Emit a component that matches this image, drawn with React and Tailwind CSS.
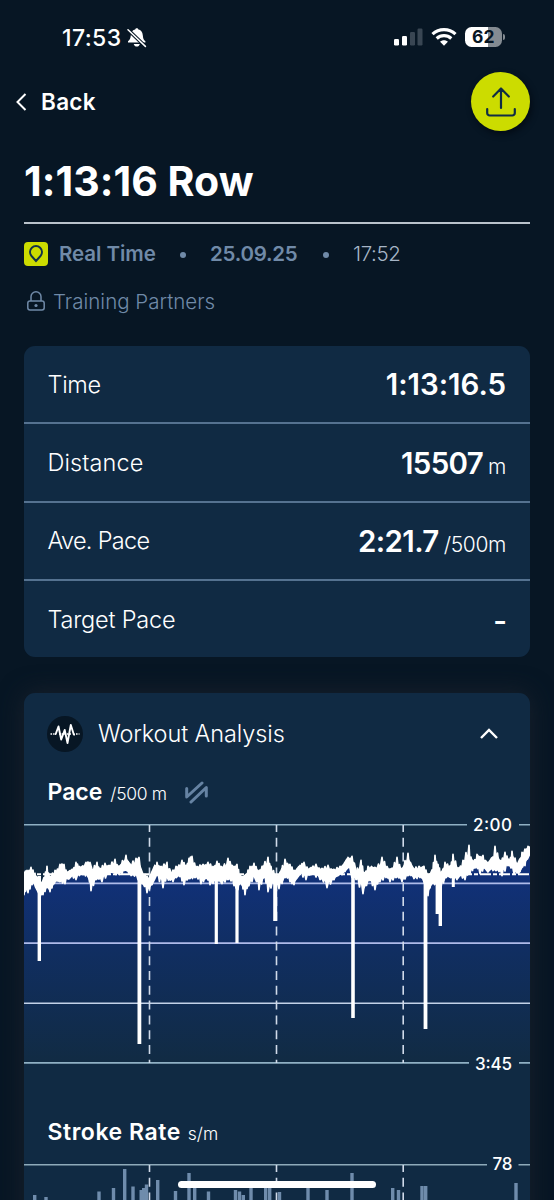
import React from "react";

const TOPS = [24,872,27,870,31,867,35,873,38,881,41,882,44,878,47,866,50,876,55,870,60,864,64,864,68,872,72,869,76,862,79,866,86,862,90,862,92,869,97,862,100,868,105,863,109,865,115,859,119,866,126,855,130,864,136,858,139,857,141,875,145,874,149,878,152,872,157,862,161,866,167,862,170,874,176,866,182,860,186,865,189,858,192,856,197,866,203,864,208,862,213,866,217,861,221,866,228,858,232,865,237,864,240,875,246,874,250,866,254,863,258,870,262,866,268,857,271,866,276,875,280,872,285,859,290,864,294,870,300,865,304,862,310,868,316,864,322,868,328,865,334,869,340,866,345,863,348,857,352,856,354,872,361,860,364,872,368,866,375,867,382,857,387,866,392,868,397,857,402,868,408,853,413,868,419,866,424,866,428,874,432,870,435,855,438,864,441,872,445,862,450,866,453,854,458,868,463,860,469,845,473,865,477,854,483,855,488,866,495,846,500,860,505,852,509,860,512,851,518,865,522,852,528,846,530,847];
const BOTTOMS = [24,895,27,888,28,893,32,885,36,884,40,898,43,895,47,888,50,892,54,884,60,882,65,884,71,876,76,880,83,875,88,877,91,891,96,880,102,882,109,874,116,875,122,874,127,871,131,876,138,880,142,884,147,893,152,885,156,875,163,888,168,878,173,882,180,877,184,885,190,879,195,878,201,884,206,879,210,885,216,882,222,884,228,880,234,886,238,890,241,883,245,895,249,886,255,877,259,890,264,878,268,892,274,884,279,889,285,878,290,882,294,885,300,874,306,880,312,874,320,880,327,888,334,880,342,875,348,868,356,880,363,894,370,881,375,890,380,882,386,878,390,882,396,878,402,882,408,876,414,879,420,878,424,882,428,896,432,884,437,885,441,888,446,878,451,878,457,880,460,876,465,880,470,874,475,867,480,874,485,868,490,870,496,871,502,876,508,866,514,874,520,872,525,866,530,852];
const DROPS = [[39.3,961,3.4],[139.4,1044,3.8],[216.3,944,3.2],[237,943,3.2],[275.2,921,4],[353,1018,3.6],[425.5,1029,3.8],[437.3,914,3.4],[440.3,926,3.4],[453.3,887,3]];

function valueAt(points, x) {
  for (let i = 0; i < points.length - 2; i += 2) {
    if (x <= points[i + 2]) {
      const t = (x - points[i]) / (points[i + 2] - points[i]);
      return points[i + 1] + t * (points[i + 3] - points[i + 1]);
    }
  }
  return points[points.length - 1];
}

// Each extreme becomes a narrow spike; smaller teeth fill the span up to the next one.
function edge(points, direction) {
  const out = [];
  for (let i = 0; i < points.length; i += 2) {
    const x = points[i];
    const y = points[i + 1];
    out.push([x, y + direction * 0.4]);
    if (i + 2 < points.length) {
      const nx = points[i + 2];
      const ny = points[i + 3];
      const span = nx - x;
      const inner = direction > 0 ? Math.max(y, ny) : Math.min(y, ny);
      if (span > 2.5) {
        out.push([x + span * 0.3, inner + direction * 2]);
        out.push([x + span * 0.5, (y + ny) / 2 + direction * ((i * 7) % 4)]);
        out.push([x + span * 0.72, inner + direction * (1 + ((i * 5) % 3))]);
      }
    }
  }
  return out;
}

const upper = edge(TOPS, 1);
const lower = edge(BOTTOMS, -1).reverse();
const band = [...upper, ...lower].map((p) => p.join(",")).join(" ");
const middle = [];
for (let x = 24; x <= 530; x += 2) middle.push([x, (valueAt(TOPS, x) + valueAt(BOTTOMS, x)) / 2]);
const middleLine = middle.map((p) => p.join(",")).join(" ");
const area = `24,1063 ${middleLine} 530,1063`;

function StatusBar() {
  return (
    <div className="flex h-[72px] items-center justify-between pl-[62px] pr-[49px] pt-[3px]">
      <div className="flex items-center gap-[5px] pt-[1px]">
        <span className="text-[23px] font-medium leading-none tracking-[0.4px]">17:53</span>
        <svg width="20" height="20" viewBox="0 0 20 20" fill="none">
          <path d="M1 14.500v-1.200C2.600 12 3.600 10.500 3.800 7.300 4 3.500 6 1.800 8.200 1.400 8.400.5 9 .2 9.800.2s1.400.3 1.600 1.200c2.300.5 4.200 2.200 4.400 5.900.2 3.200.8 4.700 2.600 6v1.200z" fill="#fff" />
          <path d="M6.700 16h6.200c-.5 1.700-1.700 2.600-3.100 2.600S7.200 17.700 6.700 16z" fill="#fff" />
          <path d="M.8 1.500 18.700 18.700" stroke="#071624" strokeWidth="3.600" />
          <path d="M1 1.700 18.400 18.400" stroke="#fff" strokeWidth="1.500" strokeLinecap="round" />
        </svg>
      </div>
      <div className="flex items-center pb-[1px]">
        <svg width="29" height="18" viewBox="0 0 29 18">
          <rect x="0" y="11" width="5" height="6.500" rx="1.200" fill="#fff" />
          <rect x="8" y="8" width="5" height="9.500" rx="1.200" fill="#fff" />
          <rect x="16" y="4" width="5" height="13.500" rx="1.200" fill="#394653" />
          <rect x="23.500" y="0.500" width="5" height="17" rx="1.200" fill="#394653" />
        </svg>
        <svg className="ml-[8px]" width="26" height="18" viewBox="0 0 26 18" fill="none" stroke="#fff">
          <path d="M1.500 6.200C8 .1 18 .1 24.500 6.200" strokeWidth="3.200" />
          <path d="M5.700 10.500c4.200-3.800 10.400-3.800 14.600 0" strokeWidth="3.200" />
          <path d="m13 17.700-3.900-4c2.200-2 5.600-2 7.800 0z" fill="#fff" stroke="none" />
        </svg>
        <div className="ml-[8px] flex items-center gap-[1px]">
          <div className="flex h-[19.500px] w-[37.500px] items-center justify-center rounded-[6.500px] bg-[linear-gradient(90deg,#fff_0_62%,#848b92_62%)] text-[17.500px] font-bold leading-none text-[#071624]">
            62
          </div>
          <div className="h-[6px] w-[2px] rounded-r-full bg-[#848b92]" />
        </div>
      </div>
    </div>
  );
}

function Row({ label, labelClass, value, valueClass, unit, last }) {
  return (
    <div className={last ? "flex h-[77px] items-center justify-between pl-[23.500px] pr-[24px]" : "flex h-[78.300px] items-center justify-between border-b-2 border-[#557290] pl-[23.500px] pr-[24px]"}>
      <span className={`text-[23.500px] font-light ${labelClass}`}>{label}</span>
      <span className="flex items-baseline gap-[5px] pt-[2px]">
        <span className={`text-[29.500px] font-semibold leading-none ${valueClass}`}>{value}</span>
        {unit && <span className="text-[21px] font-light leading-none tracking-[-0.35px]">{unit}</span>}
      </span>
    </div>
  );
}

function PaceChart() {
  return (
    <svg className="block" width="506" height="260" viewBox="24 815 506 260" fontFamily="Inter, sans-serif">
      <defs>
        <linearGradient id="paceFill" gradientUnits="userSpaceOnUse" x1="0" y1="870" x2="0" y2="1063">
          <stop offset="0" stopColor="#11317b" />
          <stop offset="0.400" stopColor="#102e62" />
          <stop offset="1" stopColor="#112b43" />
        </linearGradient>
      </defs>
      <rect x="24" y="825" width="506" height="238" fill="#112b43" />
      <polygon points={area} fill="url(#paceFill)" />
      <g strokeWidth="1.600">
        <path d="M24 824.800H467M519 824.800H530" stroke="#8fb0c4" />
        <path d="M24 883.400H530M24 943.100H530" stroke="#aebbea" />
        <path d="M24 1003.200H530" stroke="#c3d2e8" />
        <path d="M24 1062.900H469M519 1062.900H530" stroke="#8fb0c4" />
      </g>
      <path d="M149.500 825V1063M276.500 825V1063M403.200 825V1063" stroke="#d0dae9" strokeWidth="1.600" strokeDasharray="9 5.800" strokeDashoffset="2" />
      <path d="M24 874.300H530" stroke="#fff" strokeWidth="2" strokeDasharray="11 2 4 2" />
      <polygon points={band} fill="#fff" stroke="#fff" strokeWidth="1.700" strokeLinejoin="round" />
      <polyline points={middleLine} fill="none" stroke="#fff" strokeWidth="7" />
      {DROPS.map(([x, y, w]) => (
        <path key={x} d={`M${x} 876V${y}`} stroke="#fff" strokeWidth={w} />
      ))}
      <text x="473" y="830.500" fontSize="17" fontWeight="500" fill="#fff" textLength="39">2:00</text>
      <text x="475" y="1070" fontSize="17" fontWeight="500" fill="#fff" textLength="37">3:45</text>
    </svg>
  );
}

const BARS = [[34.700,1195],[46,1197],[99,1191.500],[113.500,1188],[124.700,1169],[133,1186.500],[141.200,1190],[143.700,1188],[146.500,1184.500],[157.700,1180],[175.500,1191],[189,1173],[194.700,1186],[208.500,1191.500],[235.500,1190],[239.500,1191.500],[243.300,1195],[251,1186],[265.700,1186],[269.700,1186],[279.500,1192],[308,1187],[327,1190],[352,1173],[392.700,1188],[398.500,1190],[422,1186],[425.700,1186],[516,1183]];

function StrokeChart() {
  return (
    <svg className="block" width="506" height="50" viewBox="24 1150 506 50" fontFamily="Inter, sans-serif">
      {BARS.map(([x, y]) => (
        <rect key={x} x={x - 1.7} y={y} width="3.400" height={1200 - y} fill="#6f8cac" />
      ))}
      <path d="M24 1164.800H487M518.500 1164.800H530" stroke="#8eaaba" strokeWidth="1.600" />
      <path d="M149.500 1165V1200M276.500 1165V1200M403.200 1165V1200" stroke="#d0dae9" strokeWidth="1.600" strokeDasharray="9 5.800" strokeDashoffset="2" />
      <text x="492.500" y="1170.300" fontSize="17" fontWeight="500" fill="#fff" textLength="20">78</text>
    </svg>
  );
}

export default function App() {
  return (
    <main className="relative h-[1200px] w-[554px] overflow-hidden bg-[#071624] font-['Inter',sans-serif] text-white">
      <StatusBar />
      <header className="flex h-[60px] items-start justify-between pl-[16px] pr-[24px]">
        <button className="flex h-[60px] items-center gap-[14px]">
          <svg width="11" height="18" viewBox="0 0 11 18" fill="none" stroke="#fff" strokeWidth="2"><path d="M9.500 1 1.500 9l8 8" /></svg>
          <span className="text-[22.500px] font-semibold tracking-[0.3px]">Back</span>
        </button>
        <button aria-label="Share" className="flex h-[59px] w-[59px] items-center justify-center rounded-full bg-[#ccdc00] shadow-[2px_3px_6px_#030b15]">
          <svg width="30" height="30" viewBox="0 0 30 30" fill="none" stroke="#102c45" strokeWidth="2.200" strokeLinecap="round" strokeLinejoin="round"><path d="M15 21V1.500M7.200 9.500l7.800-8 7.800 8M1.200 22v4a2.500 2.500 0 0 0 2.500 2.500h22.600a2.500 2.500 0 0 0 2.500-2.500v-4" /></svg>
        </button>
      </header>
      <section className="px-[24px]">
        <div className="flex h-[92px] items-center border-b-2 border-[#b9c2cb] pt-[8px]">
          <h1 className="whitespace-nowrap text-[41px] font-bold leading-none tracking-[0.05px]">1:13:16 Row</h1>
        </div>
        <div className="mt-[18px] flex h-[24px] items-center whitespace-nowrap text-[20.500px] leading-none text-[#708aa8]">
          <svg className="shrink-0" width="24" height="24" viewBox="0 0 24 24"><rect width="24" height="24" rx="4" fill="#ccdc00" /><path d="M12 19 7.500 14a6 6 0 1 1 9 0z" fill="none" stroke="#123149" strokeWidth="1.900" /></svg>
          <span className="ml-[11px] w-[97px] pt-[1px] font-semibold tracking-[-0.05px]">Real Time</span>
          <span className="ml-[24px] mt-[2px] h-[6px] w-[6px] rounded-full bg-current" />
          <span className="ml-[24px] w-[88px] pt-[1px] font-semibold tracking-[-0.25px]">25.09.25</span>
          <span className="ml-[25px] mt-[2px] h-[6px] w-[6px] rounded-full bg-current" />
          <span className="ml-[24px] pt-[1px] font-light tracking-[-0.4px] text-[#a6b5c7]">17:52</span>
        </div>
        <div className="mt-[23px] flex h-[24px] items-center pl-[3px] text-[20.500px] font-light leading-none text-[#708aa8]">
          <svg width="18" height="20" viewBox="0 0 18 20" fill="none" stroke="currentColor" strokeWidth="1.500"><rect x=".8" y="10" width="16.400" height="9" rx="2.200" /><path d="M4 10V5.800a5 5 0 0 1 10 0V10" /><circle cx="9" cy="14.500" r="1.600" fill="currentColor" stroke="none" /></svg>
          <span className="ml-[8px] pt-[2px]">Training Partners</span>
        </div>
      </section>
      <section className="mx-[24px] mt-[33px] h-[311px] w-[506px] overflow-hidden rounded-[11px] bg-[#102a43]">
        <Row label="Time" labelClass="tracking-[-0.3px]" value="1:13:16.5" valueClass="tracking-[-0.050px]" />
        <Row label="Distance" labelClass="tracking-[0.100px]" value="15507" valueClass="tracking-[-0.700px]" unit="m" />
        <Row label="Ave. Pace" labelClass="tracking-[-0.700px]" value="2:21.7" valueClass="tracking-[-0.600px]" unit="/500m" />
        <Row label="Target Pace" labelClass="tracking-[-0.200px]" value="-" valueClass="tracking-[-0.900px]" last />
      </section>
      <section className="mx-[24px] mt-[36px] h-[600px] w-[506px] rounded-t-[11px] bg-[#102a43] shadow-[0_0_24px_#1a212c]">
        <div className="flex h-[82px] items-center pl-[23px] pr-[24px]">
          <svg className="mb-[1px]" width="36" height="36" viewBox="0 0 36 36" fill="none"><circle cx="18" cy="18" r="18" fill="#071624" /><path d="M7.500 18h1.200L11.500 10.500l2.700 13 3.500-9.500 2.800 13 3.300-18 3 9.500h1.200" stroke="#fff" strokeWidth="1.900" strokeLinejoin="round" /><path d="M3.500 18H7M29 18h3.500M12 18h13" stroke="#fff" strokeWidth="1.500" strokeDasharray="1.600 1" /></svg>
          <h2 className="ml-[15px] text-[23.500px] font-light leading-none tracking-[-0.1px]">Workout Analysis</h2>
          <svg className="ml-auto mr-[7px]" width="20" height="12" viewBox="0 0 20 12" fill="none" stroke="#fff" strokeWidth="2.400"><path d="m2 10 8-8 8 8" /></svg>
        </div>
        <div className="flex h-[40px] items-center px-[23.500px] pb-[6px]">
          <h3 className="flex items-baseline gap-[8px] leading-none"><span className="text-[23px] font-semibold">Pace</span><span className="text-[17.500px] font-light tracking-[-0.3px]">/500 m</span></h3>
          <svg className="ml-[18px]" width="23" height="23" viewBox="0 0 23 23" fill="none" stroke="#6683a3" strokeWidth="3" strokeLinecap="round" strokeLinejoin="round"><path d="M1.700 7.500v8.500L17 2M6 21 21.300 6.500v8.500" /></svg>
        </div>
        <PaceChart />
        <div className="flex h-[75px] items-center px-[23.500px] pt-[40px]">
          <h3 className="flex items-baseline gap-[7px] leading-none"><span className="text-[23px] font-semibold tracking-[0.55px]">Stroke Rate</span><span className="text-[17.500px] font-light">s/m</span></h3>
        </div>
        <StrokeChart />
      </section>
      <div className="absolute left-[178px] top-[1181px] h-[7px] w-[198px] rounded-full bg-white" />
    </main>
  );
}
